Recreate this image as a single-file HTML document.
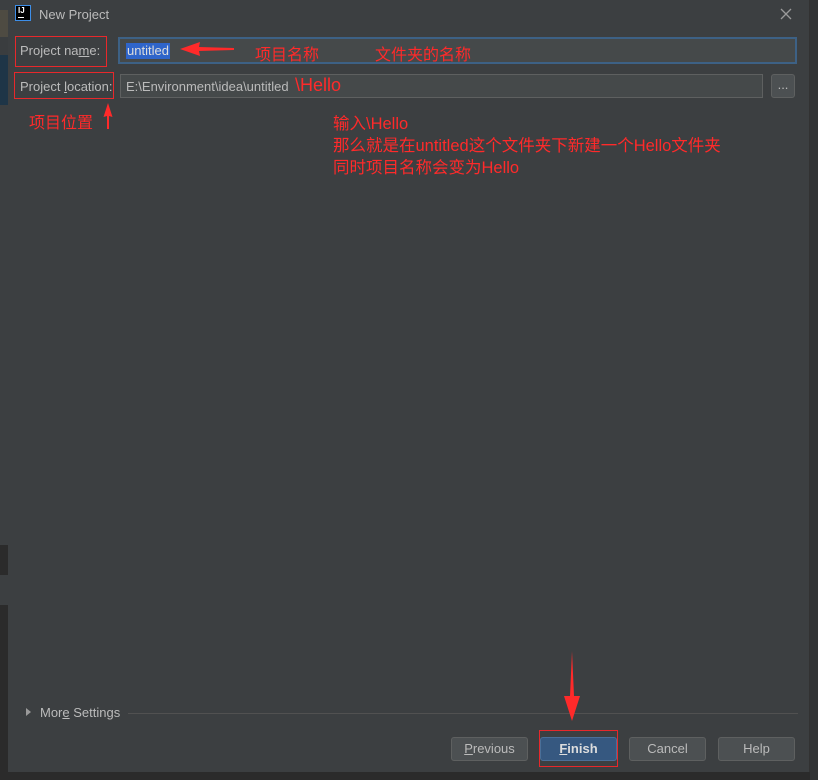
<!DOCTYPE html>
<html><head><meta charset="utf-8"><style>
*{margin:0;padding:0;box-sizing:border-box}
body{width:818px;height:780px;background:#2b2b2b;position:relative;overflow:hidden;font-family:"Liberation Sans","Noto Sans CJK SC",sans-serif;font-size:13px;color:#bbbbbb}
.abs{position:absolute}
.dlg{left:8px;top:0;width:802px;height:772px;background:#3c3f41;border-right:1px solid #323232}
.red{color:#ff2a2a;font-family:"Liberation Sans","Noto Sans CJK SC",sans-serif}
.rb{border:1px solid #e8282b}
.btn{height:24px;border:1px solid #5e6060;border-radius:3px;background:#4c5052;text-align:center;line-height:22px;color:#bbbbbb}
</style></head><body>
<div class="abs" style="left:0;top:0;width:8px;height:780px;background:#3c3f41"></div>
<div class="abs" style="left:0;top:10px;width:8px;height:27px;background:#4e4b42"></div>
<div class="abs" style="left:0;top:37px;width:8px;height:18px;background:#3a3d3f"></div>
<div class="abs" style="left:0;top:55px;width:8px;height:50px;background:#1e3547"></div>
<div class="abs" style="left:0;top:545px;width:8px;height:235px;background:#2b2b2b"></div>
<div class="abs" style="left:0;top:575px;width:8px;height:30px;background:#3c3f41"></div>
<div class="abs" style="left:810px;top:0;width:8px;height:780px;background:#313335"></div>
<div class="abs dlg"></div>
<!-- title -->
<div class="abs" style="left:15px;top:5px;width:16px;height:16px;border:1px solid #3d8ee8;background:#000"><div style="color:#fff;font-size:8px;font-weight:bold;line-height:9px;padding-left:2px">IJ</div><div style="position:absolute;left:2px;top:11px;width:6px;height:1px;background:#fff"></div></div>
<div class="abs" style="left:39px;top:7px;font-size:13px;color:#bbbbbb">New Project</div>
<svg class="abs" style="left:780px;top:8px" width="12" height="12"><path d="M1 1L11 11M11 1L1 11" stroke="#9a9a9a" stroke-width="1.3"/></svg>
<!-- name row -->
<div class="abs rb" style="left:15px;top:36px;width:92px;height:31px"></div>
<div class="abs" style="left:20px;top:43px">Project na<u>m</u>e:</div>
<div class="abs" style="left:118px;top:37px;width:679px;height:27px;border:2px solid #3d6185;background:#45494a"></div>
<div class="abs" style="left:126px;top:43px;background:#2f65ca;color:#ddd;padding:0 1px;height:16px;line-height:16px">untitled</div>
<svg class="abs" style="left:178px;top:41px" width="58" height="16"><path d="M2 8L22 1L21 6L56 7L56 9L21 10L22 15Z" fill="#ff2a2a"/></svg>
<div class="abs red" style="left:255px;top:41px;font-size:16px">项目名称</div>
<div class="abs red" style="left:375px;top:41px;font-size:16px">文件夹的名称</div>
<!-- location row -->
<div class="abs rb" style="left:14px;top:72px;width:100px;height:27px"></div>
<div class="abs" style="left:20px;top:79px">Project <u>l</u>ocation:</div>
<div class="abs" style="left:120px;top:74px;width:643px;height:24px;border:1px solid #5e6060;background:#45494a"></div>
<div class="abs" style="left:126px;top:79px;color:#bbb">E:\Environment\idea\untitled</div>
<div class="abs red" style="left:295px;top:75px;font-size:18px">\Hello</div>
<div class="abs btn" style="left:771px;top:74px;width:24px;height:24px;line-height:20px">...</div>
<div class="abs red" style="left:29px;top:109px;font-size:16px">项目位置</div>
<svg class="abs" style="left:102px;top:102px" width="12" height="28"><path d="M6 1L10.5 15L7 14L7 27L5 27L5 14L1.5 15Z" fill="#ff2a2a"/></svg>
<div class="abs red" style="left:333px;top:113px;font-size:16.5px;line-height:22px">输入\Hello<br>那么就是在untitled这个文件夹下新建一个Hello文件夹<br>同时项目名称会变为Hello</div>
<!-- more settings -->
<svg class="abs" style="left:25px;top:707px" width="8" height="10"><path d="M1 1L6 5L1 9Z" fill="#9a9a9a"/></svg>
<div class="abs" style="left:40px;top:705px">Mor<u>e</u> Settings</div>
<div class="abs" style="left:128px;top:713px;width:670px;height:1px;background:#515151"></div>
<!-- buttons -->
<svg class="abs" style="left:563px;top:651px" width="18" height="70"><path d="M9 0L11 45L17 45L9 70L1 45L7 45Z" fill="#ff2a2a"/></svg>
<div class="abs btn" style="left:451px;top:737px;width:77px"><u>P</u>revious</div>
<div class="abs rb" style="left:539px;top:730px;width:79px;height:37px"></div>
<div class="abs btn" style="left:540px;top:737px;width:77px;background:#365880;border-color:#4a6f98;color:#ddd;font-weight:bold"><u>F</u>inish</div>
<div class="abs btn" style="left:629px;top:737px;width:77px">Cancel</div>
<div class="abs btn" style="left:718px;top:737px;width:77px">Help</div>
</body></html>
